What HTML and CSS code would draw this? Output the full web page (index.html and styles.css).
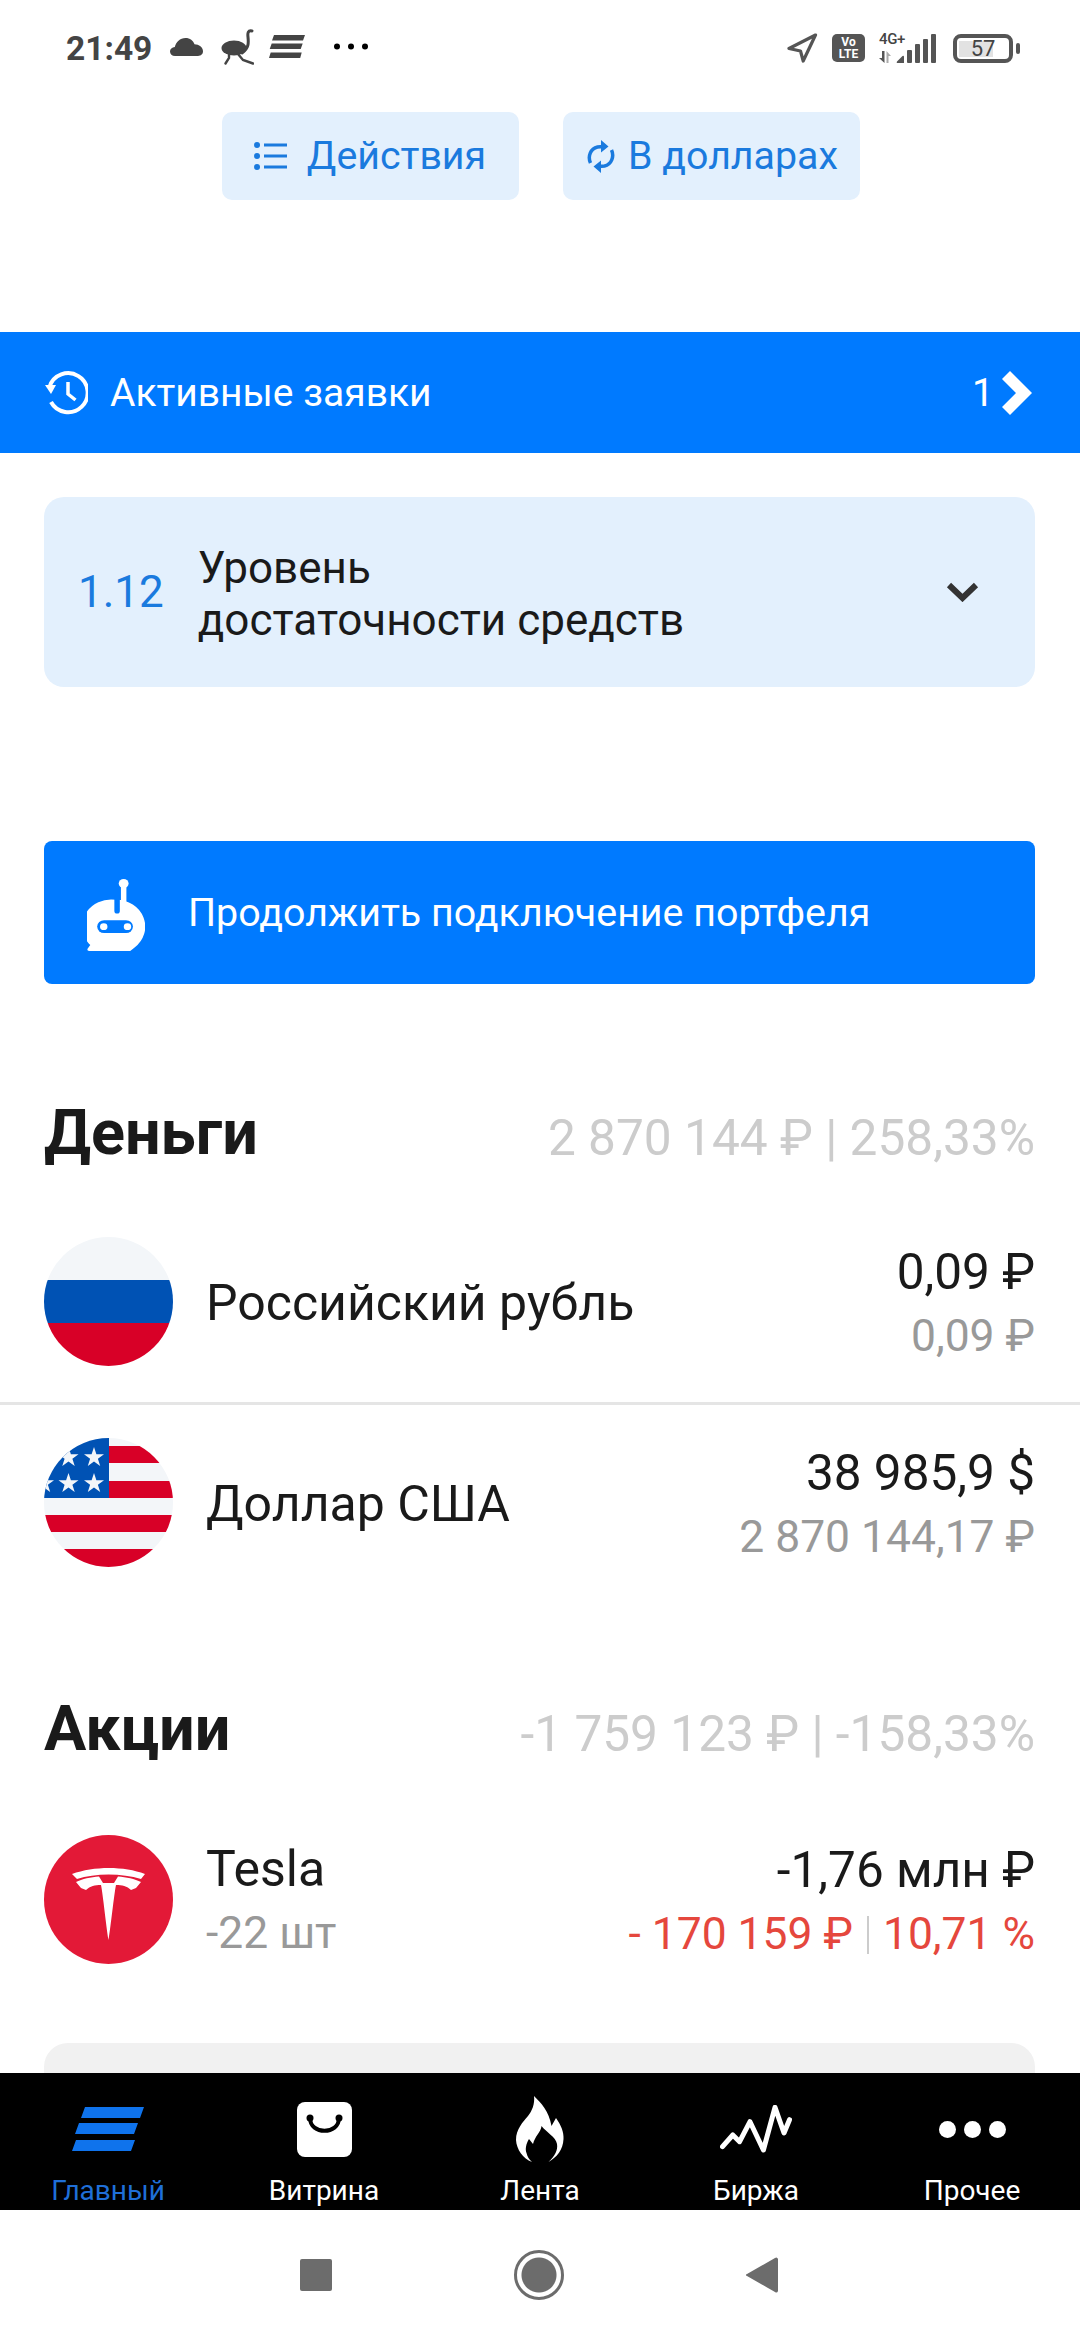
FILE: index.html
```html
<!DOCTYPE html>
<html lang="ru">
  <head>
    <meta charset="UTF-8" />
    <meta name="viewport" content="width=device-width, initial-scale=1.0" />
    <title>Портфель</title>
    <link rel="stylesheet" href="styles.css">
  </head>
  <body>
    <div class="status">
      <div class="status-left">
        <span class="time">21:49</span>
        <svg class="st-cloud" width="33" height="18" viewBox="0 0 33 18"><path d="M5 18C2 18 0 16 0 13.500 0 11 2 9.300 4.800 9 6 4 10 0 15.500 0c4.500 0 7.800 2.500 9 6.300C29 6.500 33 9.300 33 13.300 33 16 31 18 28 18z" fill="#444"/></svg>
        <svg class="st-bird" width="33" height="36" viewBox="0 0 33 36" fill="none" stroke="#444" stroke-linecap="round"><ellipse cx="13" cy="19" rx="12.500" ry="7.500" fill="#444" stroke="none"/><path d="M31 2C27 1 26.500 4 27 8c.6 6 1 11-6 16" stroke-width="3"/><path d="M8 24v5l-3.500 5.500M17 25l5 6 10 3.500" stroke-width="2.400"/></svg>
        <svg class="st-stack" width="36" height="23" viewBox="0 0 36 23"><path d="M5 0h31l-2 5.500H3zM2.700 8.500h31l-2 5.500H.7zM1.700 17.500h31l-1.500 5.500H0z" fill="#444"/></svg>
        <svg class="st-dots" width="34" height="7" viewBox="0 0 34 7"><circle cx="3" cy="3.500" r="3"/><circle cx="17" cy="3.500" r="3"/><circle cx="31" cy="3.500" r="3"/></svg>
      </div>
      <div class="status-right">
        <svg width="31" height="30" viewBox="0 0 31 30"><path d="M28.500 2 2 15.500 13.500 18l2.700 10z" fill="none" stroke="#555" stroke-width="3.200" stroke-linejoin="round"/></svg>
        <div class="volte"><span>Vo</span><span>LTE</span></div>
        <div class="signal">
          <span class="net">4G+</span>
          <svg width="57" height="29" viewBox="0 0 57 29"><path d="M3 17h2.500v12L0 24h3z" fill="#555"/><path d="M7.500 17 12 22H9.500v7h-2z" fill="#aaa"/><path d="M18 27.500 23.500 22q1.500-1 1.500 1v6h-6q-2 0-1-1.500z" fill="#555"/><rect x="28" y="16" width="5" height="13" rx="1" fill="#555"/><rect x="36" y="10" width="5" height="19" rx="1" fill="#555"/><rect x="44" y="5" width="5" height="24" rx="1" fill="#555"/><rect x="52" y="0" width="5" height="29" rx="1" fill="#555"/></svg>
        </div>
        <div class="battery">
          <div class="battery-body"><span class="battery-fill"></span><span class="battery-num">57</span></div>
          <span class="battery-tip"></span>
        </div>
      </div>
    </div>

    <div class="screen">
      <div class="top-buttons">
        <div class="top-btn">
          <svg width="33" height="28" viewBox="0 0 33 28"><circle cx="3" cy="3" r="3"/><circle cx="3" cy="14" r="3"/><circle cx="3" cy="25" r="3"/><rect x="10" y="1.500" width="23" height="3"/><rect x="10" y="12.500" width="23" height="3"/><rect x="10" y="23.500" width="23" height="3"/></svg>
          <span class="gap-lg">Действия</span>
        </div>
        <div class="top-btn shifted">
          <svg width="28" height="33" viewBox="0 0 28 33"><path d="M3.500 23C.5 16.500 3.500 8.500 10.500 7l6-.5M24.500 10c3 6.500 0 14.500-7 16l-6 .5" fill="none" stroke="#1a7ade" stroke-width="3.500"/><path d="M14 0l7.500 6.500-7.500 6zM14 33l-7.500-6.500 7.500-6z"/></svg>
          <span class="gap-sm">В долларах</span>
        </div>
      </div>

      <div class="orders">
        <svg width="43" height="44" viewBox="0 0 43 44"><path d="M4.500 16A19.500 19.500 0 1 1 6 31" fill="none" stroke="#fff" stroke-width="4"/><path d="M0 14h11l-5 9z" fill="#fff"/><path d="M23 11v12l7.500 6" fill="none" stroke="#fff" stroke-width="3.500"/></svg>
        <span class="orders-title">Активные заявки</span>
        <span class="orders-count">1</span>
        <svg width="30" height="44" viewBox="0 0 30 44"><path d="M8 0 30 22 8 44 0 36 14 22 0 8z" fill="#fff"/></svg>
      </div>

      <div class="level">
        <span class="level-num">1.12</span>
        <span class="level-text">Уровень<br>достаточности средств</span>
        <svg width="33" height="20" viewBox="0 0 33 20"><path d="M3 3l13.500 13L30 3" fill="none" stroke="#333" stroke-width="6"/></svg>
      </div>

      <div class="connect">
        <svg width="58" height="72" viewBox="0 0 53 71" preserveAspectRatio="none"><circle cx="33.500" cy="4.500" r="4.500" fill="#fff"/><rect x="31" y="4" width="5" height="20" fill="#fff"/><path d="M26.500 20.500a26.500 26.500 0 0 1 17 47l-4 3.500H2c-2 0-2-2-1-3l2-3A26.500 26.500 0 0 1 26.500 20.500z" fill="#fff"/><rect x="25" y="16" width="5" height="18" rx="2.500" fill="#007aff"/><rect x="9.300" y="40.600" width="32.700" height="12.700" rx="6.350" fill="#007aff"/><circle cx="15.300" cy="47" r="3.400" fill="#fff"/><circle cx="37" cy="47" r="3.400" fill="#fff"/></svg>
        <span>Продолжить подключение портфеля</span>
      </div>

      <div class="section-head first">
        <h2>Деньги</h2>
        <span>2 870 144 ₽ | 258,33%</span>
      </div>

      <div class="row row-line">
        <svg class="round" width="129" height="129" viewBox="0 0 129 129"><rect width="129" height="43" fill="#f3f6f9"/><rect y="43" width="129" height="43" fill="#0052b4"/><rect y="86" width="129" height="43" fill="#d80027"/></svg>
        <div class="row-name"><span>Российский рубль</span></div>
        <div class="row-sum"><span>0,09 ₽</span><span class="muted">0,09 ₽</span></div>
      </div>

      <div class="row">
        <svg class="round" width="129" height="129" viewBox="0 0 129 129">
          <rect width="129" height="129" fill="#f3f6f9"/>
          <rect x="65" y="8" width="64" height="17" fill="#d80027"/>
          <rect x="65" y="43" width="64" height="17" fill="#d80027"/>
          <rect y="77" width="129" height="17" fill="#d80027"/>
          <rect y="111" width="129" height="18" fill="#d80027"/>
          <rect width="65" height="60" fill="#0052b4"/>
          <g fill="#f3f6f9">
            <path d="M50 9l2.400 7.200H60l-6.100 4.500 2.300 7.300-6.200-4.500-6.200 4.500 2.300-7.300-6.100-4.500h7.600z"/>
            <path d="M24.500 9l2.400 7.200h7.600l-6.100 4.500 2.300 7.300-6.200-4.500-6.200 4.500 2.300-7.300-6.100-4.500h7.600z"/>
            <path d="M50 35l2.400 7.200H60l-6.100 4.500 2.300 7.300-6.200-4.500-6.200 4.500 2.300-7.300-6.100-4.500h7.600z"/>
            <path d="M24.500 35l2.400 7.200h7.600l-6.100 4.500 2.300 7.300-6.200-4.500-6.200 4.500 2.300-7.300-6.100-4.500h7.600z"/>
            <path d="M0 35l2.400 7.200H10l-6.100 4.500 2.300 7.300L0 49.500l-6.200 4.500-2.300-7.300-6.100-4.500h7.600z"/>
          </g>
        </svg>
        <div class="row-name"><span>Доллар США</span></div>
        <div class="row-sum"><span>38 985,9 $</span><span class="muted">2 870 144,17 ₽</span></div>
      </div>

      <div class="section-head second">
        <h2>Акции</h2>
        <span>-1 759 123 ₽ | -158,33%</span>
      </div>

      <div class="row">
        <svg class="round" width="129" height="129" viewBox="0 0 129 129">
          <rect width="129" height="129" fill="#e31937"/>
          <path d="M28 39C50 31 80 31 101 39L97 44C78 38 51 38 33 44z" fill="#fff"/>
          <path d="M32 47C38 44 47 42 55 41.500L59 48H70L74 41.500C82 42 91 44 97 47L92 53 87 55C83 51 78 50 72 50 70 60 67 90 64.500 105 62 90 59 60 57 50 51 50 46 51 42 55L37 53z" fill="#fff"/>
        </svg>
        <div class="row-name two-line"><span>Tesla</span><span class="muted">-22 шт</span></div>
        <div class="row-sum"><span>-1,76 млн ₽</span><span class="loss">- 170 159 ₽ <i class="sep"></i> 10,71 %</span></div>
      </div>

      <div class="next-card"></div>
    </div>

    <nav class="tabs">
      <div class="tab active">
        <div class="tab-icon"><svg width="72" height="44" viewBox="0 0 72 44"><path d="M13 0h59l-4 11H9zM7 16h59l-4 11H3zM4 33h59l-4 11H0z" fill="#0f73ec"/></svg></div>
        <span>Главный</span>
      </div>
      <div class="tab">
        <div class="tab-icon"><svg width="55" height="55" viewBox="0 0 55 55"><rect width="55" height="55" rx="8" fill="#fff"/><path d="M13 16C13 33 42 33 42 16" fill="none" stroke="#000" stroke-width="4"/><circle cx="13" cy="16" r="3.500"/><circle cx="42" cy="16" r="3.500"/></svg></div>
        <span>Витрина</span>
      </div>
      <div class="tab">
        <div class="tab-icon"><svg width="48" height="66" viewBox="0 0 48 66"><path d="M18 0C25 7 33 15 35.500 30L40 22C45 29 48 36 47.500 43 47 54 41 61 32.500 66 39 60 42 54 41 48 40 41 30 36 25.500 30 25 36 19 40 17 48L13 43C10 48 9 53 10.500 57 11.500 61 13 63 16 66 7 63 .5 53 0 44 0 33 7 26 12 20 16 15 19 8 18 0z" fill="#fff"/></svg></div>
        <span>Лента</span>
      </div>
      <div class="tab">
        <div class="tab-icon"><svg width="72" height="48" viewBox="0 0 72 48"><path d="M2.500 41.700 12.800 30l6.800 6.700L30 16.700 43.400 45 55 2.300 64 28 69.500 14.700" fill="none" stroke="#fff" stroke-width="5" stroke-linecap="round" stroke-linejoin="round"/></svg></div>
        <span>Биржа</span>
      </div>
      <div class="tab">
        <div class="tab-icon"><svg width="67" height="17" viewBox="0 0 67 17"><circle cx="8.500" cy="8.500" r="8.500" fill="#fff"/><circle cx="33.500" cy="8.500" r="8.500" fill="#fff"/><circle cx="58.500" cy="8.500" r="8.500" fill="#fff"/></svg></div>
        <span>Прочее</span>
      </div>
    </nav>

    <div class="sysnav">
      <span class="sys-square"></span>
      <span class="sys-circle"></span>
      <svg width="32" height="36" viewBox="0 0 32 36"><path d="M29 1 1 17a1 1 0 0 0 0 2l28 16a2 2 0 0 0 3-1V2a2 2 0 0 0-3-1z" fill="#6c6c6c"/></svg>
    </div>
  </body>
</html>
```

FILE: styles.css
```css
* {
  box-sizing: border-box;
}
html,
body {
  margin: 0;
  padding: 0;
}
body {
  width: 1080px;
  height: 2340px;
  display: flex;
  flex-direction: column;
  overflow: hidden;
  background: #fff;
  font-family: Roboto, "Noto Sans", sans-serif;
  color: #1a1a1a;
}

/* status bar */
.status {
  height: 112px;
  flex: none;
  display: flex;
  justify-content: space-between;
  padding: 26px 60px 0 66px;
  align-items: flex-start;
}
.status-left,
.status-right {
  display: flex;
  align-items: center;
  height: 44px;
}
.status-left svg {
  margin-top: -3px;
}
.time {
  font-size: 33.5px;
  font-weight: 700;
  color: #444;
}
.st-cloud {
  margin-left: 18px;
}
.st-bird {
  margin-left: 18px;
}
.st-stack {
  margin-left: 15px;
}
.st-dots {
  margin-left: 29px;
}
.volte {
  width: 33px;
  height: 28px;
  margin-left: 14px;
  background: #555;
  border-radius: 5px;
  color: #fff;
  font-size: 12px;
  line-height: 12.5px;
  font-weight: 700;
  display: flex;
  flex-direction: column;
  align-items: center;
  justify-content: center;
}
.signal {
  position: relative;
  margin-left: 14px;
  width: 57px;
  height: 29px;
}
.net {
  position: absolute;
  left: 0;
  top: -1px;
  font-size: 15px;
  font-weight: 500;
  line-height: 13px;
  letter-spacing: -0.4px;
  color: #444;
}
.battery {
  margin-left: 17px;
  display: flex;
  align-items: center;
}
.battery-body {
  position: relative;
  width: 60px;
  height: 29px;
  border: 4px solid #555;
  border-radius: 8px;
  display: flex;
  align-items: center;
  justify-content: center;
}
.battery-fill {
  position: absolute;
  left: 2px;
  top: 3px;
  bottom: 2px;
  width: 34px;
  background: #e2e2e2;
}
.battery-num {
  position: relative;
  font-size: 22px;
  color: #444;
}
.battery-tip {
  width: 4px;
  height: 11px;
  margin-left: 3px;
  background: #555;
  border-radius: 2px;
}

/* scrolling part */
.screen {
  flex: 1;
  min-height: 0;
  overflow: hidden;
}
.top-buttons {
  display: flex;
  justify-content: center;
  gap: 44px;
  padding-left: 1px;
}
.top-btn {
  width: 297px;
  height: 88px;
  display: flex;
  align-items: center;
  justify-content: center;
  background: #e3f0fd;
  border-radius: 10px;
  color: #1a7ade;
  fill: #1a7ade;
  font-size: 39.3px;
}
.top-btn.shifted {
  padding-left: 3px;
}
.gap-lg {
  margin-left: 20px;
}
.gap-sm {
  margin-left: 13px;
}

.orders {
  margin-top: 132px;
  height: 121px;
  display: flex;
  align-items: center;
  padding: 0 48px 0 45px;
  background: #007aff;
  color: #fff;
  font-size: 39px;
}
.orders-title {
  margin-left: 22px;
  flex: 1;
}
.orders-count {
  margin-right: 8px;
}

.level {
  margin: 44px 45px 0 44px;
  height: 190px;
  display: flex;
  align-items: center;
  padding: 0 56px 0 34px;
  background: #e3f0fd;
  border-radius: 20px;
}
.level-num {
  font-size: 44px;
  color: #1a7ade;
}
.level-text {
  flex: 1;
  margin-left: 34px;
  padding-top: 3px;
  font-size: 44px;
  line-height: 52px;
}

.connect {
  margin: 154px 45px 0 44px;
  height: 143px;
  display: flex;
  align-items: center;
  padding-left: 43px;
  background: #007aff;
  border-radius: 8px;
  color: #fff;
  font-size: 39.4px;
}
.connect svg {
  margin-top: 4px;
}
.connect span {
  margin-left: 43px;
}

.section-head {
  display: flex;
  justify-content: space-between;
  align-items: flex-start;
  margin: 0 45px 0 44px;
  color: #ccc;
  font-size: 49.6px;
  line-height: 90px;
}
.section-head h2 {
  margin: 0;
  font-size: 63px;
  line-height: 80px;
  font-weight: 700;
  color: #1a1a1a;
}
.section-head.first {
  height: 80px;
  margin-top: 109px;
  margin-bottom: 64px;
}
.section-head.second {
  height: 80px;
  margin-top: 122px;
  margin-bottom: 66px;
}

.row {
  height: 129px;
  display: flex;
  align-items: center;
  padding: 0 45px 0 44px;
}
.row-line {
  height: 168px;
  padding-bottom: 36px;
  margin-bottom: 33px;
  border-bottom: 3px solid #e5e5e5;
}
.round {
  flex: none;
  border-radius: 50%;
}
.row-name {
  flex: 1;
  margin-left: 33px;
  padding-top: 3px;
  font-size: 50px;
  line-height: 64px;
  display: flex;
  flex-direction: column;
}
.row-sum {
  display: flex;
  flex-direction: column;
  align-items: flex-end;
  padding-top: 5px;
  font-size: 49.5px;
  line-height: 64px;
}
.muted {
  color: #999;
  font-size: 44.4px;
}
.loss {
  color: #e5473d;
  font-size: 44.4px;
}
.sep {
  display: inline-block;
  width: 2px;
  height: 38px;
  margin: 0 3px;
  vertical-align: -5px;
  background: #ccc;
}
.next-card {
  height: 120px;
  margin: 79px 45px 0 44px;
  background: #f1f1f1;
  border-radius: 24px;
}

/* bottom menu */
.tabs {
  flex: none;
  height: 137px;
  display: grid;
  grid-template-columns: repeat(5, 1fr);
  background: #000;
  color: #fff;
  font-size: 28px;
  line-height: 34px;
}
.tab {
  display: flex;
  flex-direction: column;
  align-items: center;
  overflow: hidden;
}
.tab-icon {
  height: 101px;
  padding-top: 11px;
  display: flex;
  align-items: center;
}
.tab.active {
  color: #1f6fd8;
}

.sysnav {
  flex: none;
  height: 130px;
  display: grid;
  grid-template-columns: 32px 50px 32px;
  justify-content: center;
  align-items: center;
  column-gap: 182px;
  padding-right: 2px;
}
.sys-square {
  width: 32px;
  height: 32px;
  background: #6c6c6c;
  border-radius: 2px;
}
.sys-circle {
  width: 50px;
  height: 50px;
  border: 3px solid #6c6c6c;
  border-radius: 50%;
  background: radial-gradient(circle, #6c6c6c 17px, #fff 18px);
}
```
